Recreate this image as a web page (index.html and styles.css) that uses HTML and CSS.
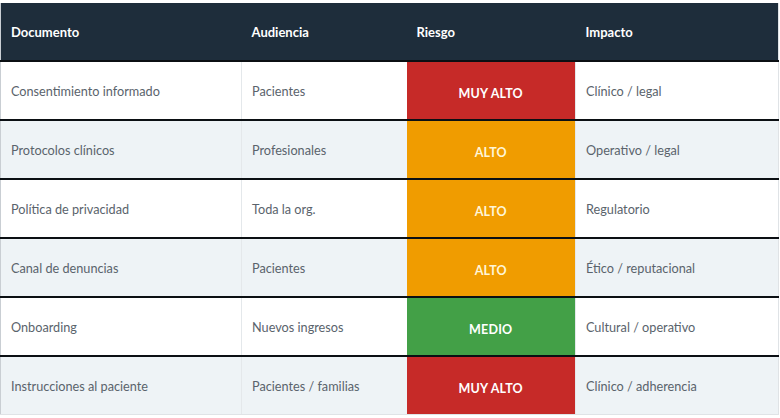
FILE: index.html
```html
<!DOCTYPE html>
<html lang="es">
<head>
<meta charset="utf-8">
<title>Riesgo documental</title>
<link rel="stylesheet" href="styles.css">
</head>
<body>
<table class="risk-table">
  <colgroup>
    <col class="c-doc"><col class="c-aud"><col class="c-risk"><col class="c-imp">
  </colgroup>
  <thead>
    <tr><th>Documento</th><th>Audiencia</th><th>Riesgo</th><th>Impacto</th></tr>
  </thead>
  <tbody>
    <tr><td>Consentimiento informado</td><td>Pacientes</td><td class="risk very-high">MUY ALTO</td><td>Clínico / legal</td></tr>
    <tr><td>Protocolos clínicos</td><td>Profesionales</td><td class="risk high">ALTO</td><td>Operativo / legal</td></tr>
    <tr><td>Política de privacidad</td><td>Toda la org.</td><td class="risk high">ALTO</td><td>Regulatorio</td></tr>
    <tr><td>Canal de denuncias</td><td>Pacientes</td><td class="risk high">ALTO</td><td>Ético / reputacional</td></tr>
    <tr><td>Onboarding</td><td>Nuevos ingresos</td><td class="risk medium">MEDIO</td><td>Cultural / operativo</td></tr>
    <tr><td>Instrucciones al paciente</td><td>Pacientes / familias</td><td class="risk very-high">MUY ALTO</td><td>Clínico / adherencia</td></tr>
  </tbody>
</table>
</body>
</html>
```

FILE: styles.css
```css
html, body {
  margin: 0;
  padding: 0;
  background: #ffffff;
}
body {
  padding-top: 3px;
  font-family: "Lato", "Open Sans", sans-serif;
}
.risk-table {
  width: 778px;
  border-collapse: collapse;
  table-layout: fixed;
  border-left: 1px solid #c9ced3;
  border-right: 1px solid #dfe3e6;
}
.c-doc { width: 241px; }
.c-aud { width: 165px; }
.c-risk { width: 169px; }
.c-imp { width: 203px; }

.risk-table th {
  height: 57px;
  padding: 0 0 0 10px;
  background: #1e2d3b;
  color: #ffffff;
  font-size: 13px;
  font-weight: 700;
  text-align: left;
  border-bottom: 2px solid #0b0f13;
}
.risk-table td {
  height: 57px;
  padding: 0 0 0 10px;
  font-size: 12.7px;
  color: #5a636c;
  border-bottom: 2px solid #0b0f13;
  border-left: 1px solid #e4e8eb;
}
.risk-table td:first-child { border-left: none; }
.risk-table tbody tr:nth-child(even) td { background: #eef3f6; }
.risk-table tbody tr:last-child td { border-bottom: 1px solid #dfe3e6; }

.risk-table td.risk {
  height: 51px;
  padding: 6px 0 0 0;
  text-align: center;
  font-size: 12.5px;
  font-weight: 700;
  color: #ffffff;
  letter-spacing: 0.2px;
  border-left: none;
}
.risk-table tbody tr td.very-high { background: #c62a28; }
.risk-table tbody tr td.high { background: #f09c00; color: #fff6d8; }
.risk-table tbody tr td.medium { background: #43a047; }
```
